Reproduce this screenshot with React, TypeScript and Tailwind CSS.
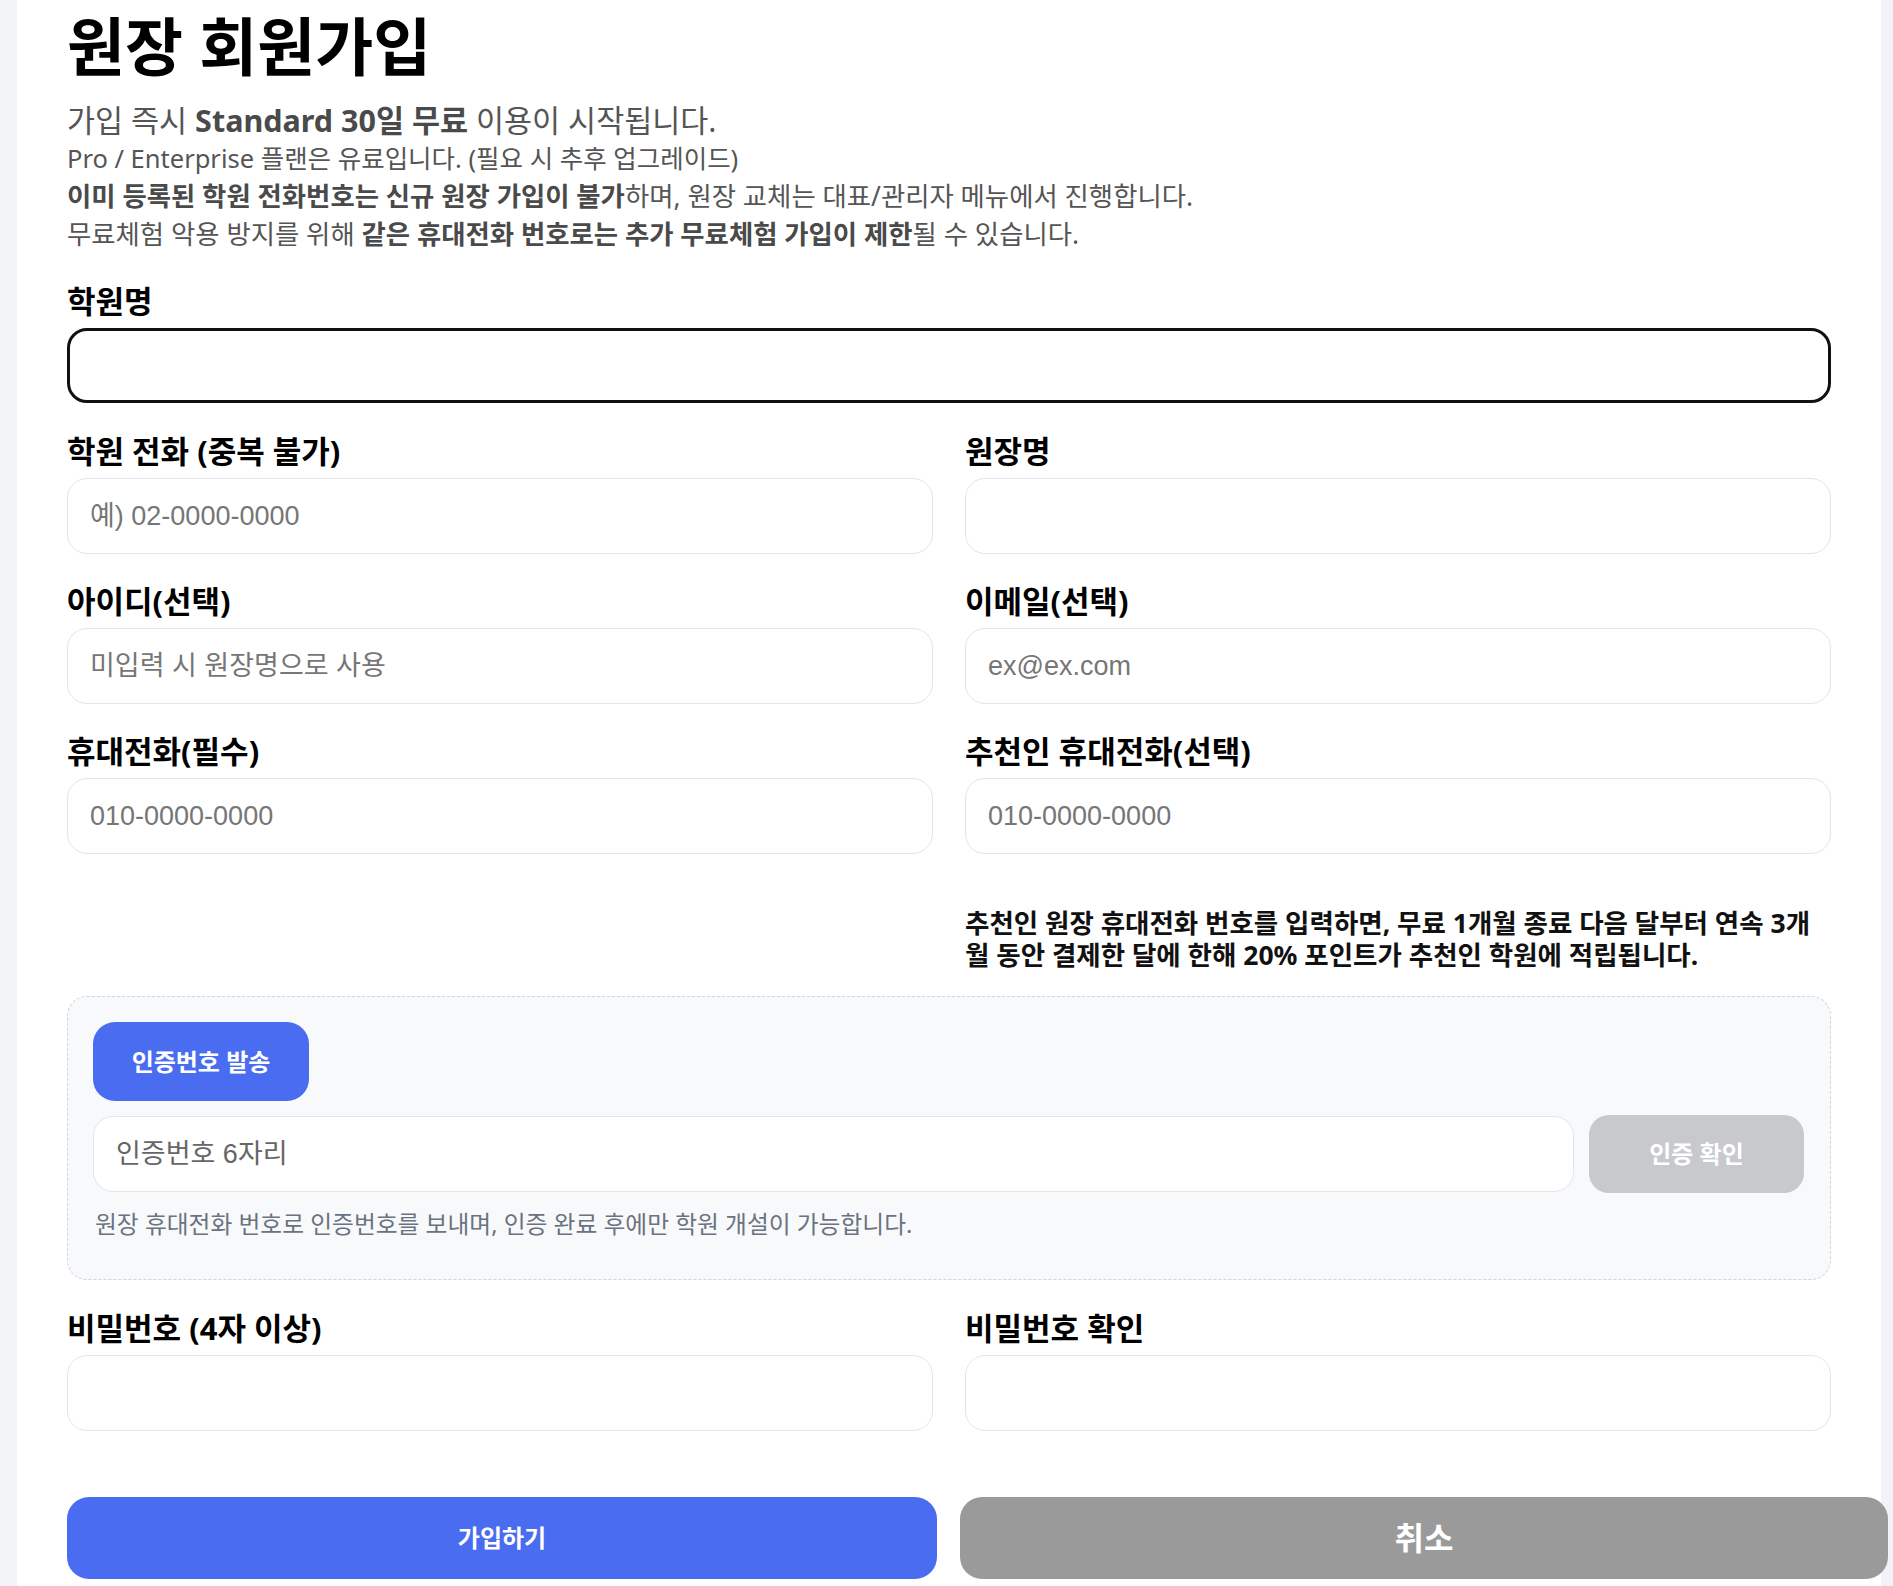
import React from "react";

function Label({ children }: { children: React.ReactNode }) {
  return (
    <div className="mb-[9px] whitespace-nowrap font-['Noto_Sans','Noto_Sans_CJK_KR',sans-serif] text-[31px] font-bold leading-[36px] text-black">
      {children}
    </div>
  );
}

function TextInput({ placeholder, type = "text" }: { placeholder?: string; type?: string }) {
  return (
    <input
      type={type}
      placeholder={placeholder}
      className="block h-[76px] w-full rounded-[20px] border border-[#e3e5ea] bg-white px-[22px] font-['Liberation_Sans','Noto_Sans_CJK_KR',sans-serif] text-[27px] text-black outline-none placeholder:text-[#767676]"
    />
  );
}

function Field({ label, placeholder, type }: { label: string; placeholder?: string; type?: string }) {
  return (
    <div>
      <Label>{label}</Label>
      <TextInput placeholder={placeholder} type={type} />
    </div>
  );
}

export default function App() {
  return (
    <div className="min-h-screen bg-[#f2f3f7] pl-[17px] pr-[12px]">
      <div className="bg-white px-[50px] pb-[7px] pt-[11px] font-['Noto_Sans','Noto_Sans_CJK_KR',sans-serif]">
        <h1 className="whitespace-nowrap text-[63px] font-bold leading-[70px] text-black">원장 회원가입</h1>

        <div className="mt-[20px] whitespace-nowrap text-[30.5px] leading-[38px] text-[#555]">
          가입 즉시 <b className="font-bold text-[#4a4a4a]">Standard 30일 무료</b> 이용이 시작됩니다.
        </div>
        <div className="whitespace-nowrap leading-[38px] text-[#555]">
          <div className="text-[25.5px]">Pro / Enterprise 플랜은 유료입니다. (필요 시 추후 업그레이드)</div>
          <div className="text-[26.4px]">
            <b className="font-bold text-[#4a4a4a]">이미 등록된 학원 전화번호는 신규 원장 가입이 불가</b>하며, 원장 교체는 대표/관리자 메뉴에서 진행합니다.
          </div>
          <div className="text-[26.4px]">
            무료체험 악용 방지를 위해 <b className="font-bold text-[#4a4a4a]">같은 휴대전화 번호로는 추가 무료체험 가입이 제한</b>될 수 있습니다.
          </div>
        </div>

        <div className="mt-[30px]">
          <Label>학원명</Label>
          <input
            type="text"
            className="block h-[75px] w-full rounded-[20px] border-[3px] border-[#111] bg-white px-[22px] font-['Liberation_Sans','Noto_Sans_CJK_KR',sans-serif] text-[27px] text-black outline-none"
          />
        </div>

        <div className="mt-[30px] grid grid-cols-2 gap-x-[32px] gap-y-[29px]">
          <Field label="학원 전화 (중복 불가)" placeholder="예) 02-0000-0000" />
          <Field label="원장명" />
          <Field label="아이디(선택)" placeholder="미입력 시 원장명으로 사용" />
          <Field label="이메일(선택)" placeholder="ex@ex.com" />
          <Field label="휴대전화(필수)" placeholder="010-0000-0000" />
          <Field label="추천인 휴대전화(선택)" placeholder="010-0000-0000" />
        </div>

        <div className="mt-[53px] grid grid-cols-2 gap-x-[32px]">
          <div />
          <div className="whitespace-nowrap text-[26.5px] font-bold leading-[32px] text-[#111]">
            추천인 원장 휴대전화 번호를 입력하면, 무료 1개월 종료 다음 달부터 연속 3개
            <br />월 동안 결제한 달에 한해 20% 포인트가 추천인 학원에 적립됩니다.
          </div>
        </div>

        <div className="mt-[25px] rounded-[20px] border border-dashed border-[#cdd5e1] bg-[#f8f9fb] pb-[41px] pl-[25px] pr-[26px] pt-[25px]">
          <button
            type="button"
            className="flex h-[79px] w-[216px] items-center justify-center rounded-[22px] bg-[#4a6cf0] text-[24px] font-bold text-white"
          >
            인증번호 발송
          </button>
          <div className="mt-[14px] flex items-center gap-[15px]">
            <input
              type="text"
              placeholder="인증번호 6자리"
              className="block h-[76px] min-w-0 flex-1 rounded-[20px] border border-[#e3e5ea] bg-white px-[22px] font-['Liberation_Sans','Noto_Sans_CJK_KR',sans-serif] text-[27px] text-black outline-none placeholder:text-[#666]"
            />
            <button
              type="button"
              className="flex h-[78px] w-[215px] shrink-0 items-center justify-center rounded-[20px] bg-[#c8c9cc] text-[24px] font-bold text-white"
            >
              인증 확인
            </button>
          </div>
          <div className="mt-[17px] whitespace-nowrap pl-[2px] text-[23.75px] leading-[28px] text-[#6b7280]">
            원장 휴대전화 번호로 인증번호를 보내며, 인증 완료 후에만 학원 개설이 가능합니다.
          </div>
        </div>

        <div className="mt-[30px] grid grid-cols-2 gap-x-[32px]">
          <Field label="비밀번호 (4자 이상)" type="password" />
          <Field label="비밀번호 확인" type="password" />
        </div>

        <div className="mt-[66px] flex gap-[23px]">
          <button
            type="button"
            className="flex h-[82px] w-[870px] shrink-0 items-center justify-center rounded-[22px] bg-[#4a6cf0] text-[24px] font-bold text-white"
          >
            가입하기
          </button>
          <button
            type="button"
            className="flex h-[82px] w-[928px] shrink-0 items-center justify-center rounded-[22px] bg-[#9a9a9a] text-[32px] font-bold text-white"
          >
            취소
          </button>
        </div>
      </div>
    </div>
  );
}
